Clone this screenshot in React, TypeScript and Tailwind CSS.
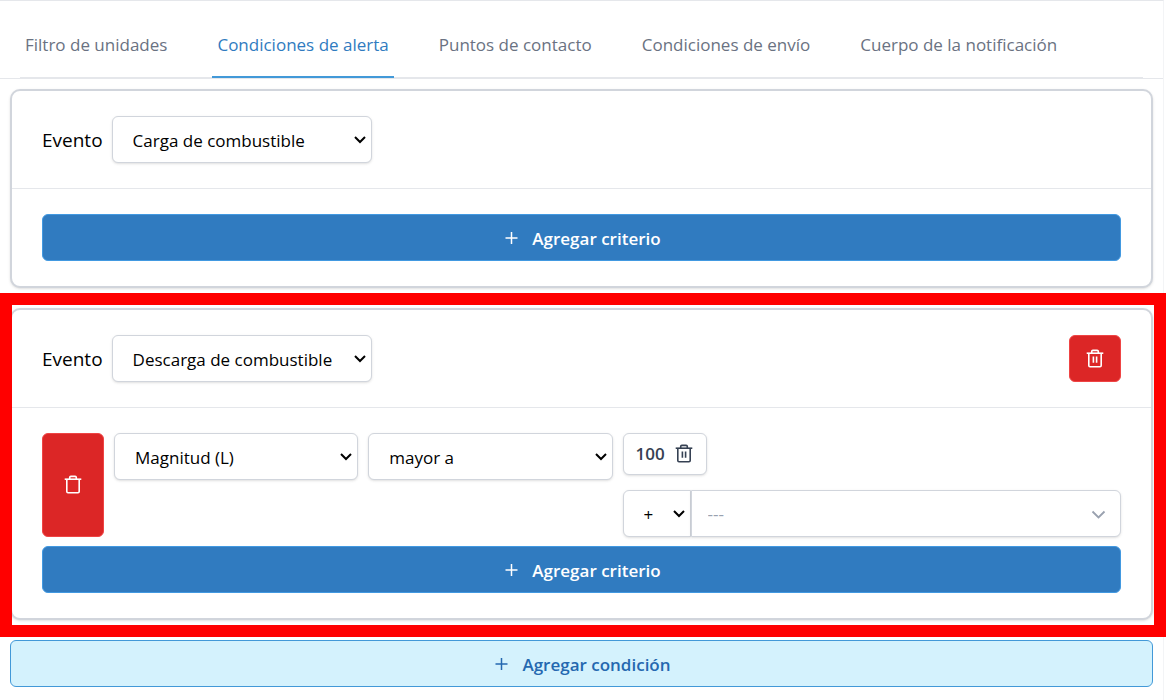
import { useState } from 'react';

const TABS = [
  'Filtro de unidades',
  'Condiciones de alerta',
  'Puntos de contacto',
  'Condiciones de envío',
  'Cuerpo de la notificación',
];

const EVENTOS = ['Carga de combustible', 'Descarga de combustible'];

function PlusIcon() {
  return (
    <svg className="size-5" viewBox="0 0 20 20" fill="none" stroke="currentColor" aria-hidden="true">
      <path d="M9.5 3v12M3.500 9h12" strokeWidth="1.500" />
    </svg>
  );
}

function TrashIcon({ lines = true }: { lines?: boolean }) {
  return (
    <svg className="size-5" viewBox="0 0 20 20" fill="none" stroke="currentColor" strokeWidth="1.6" aria-hidden="true">
      <path d="M1.700 4.200h16.600" />
      <path d="M3.800 4.200v12.300q0 1.200 1.200 1.200h10q1.200 0 1.200-1.200V4.200" />
      <path d="M6.700 4.200V2.600q0-1.200 1.200-1.200h4.200q1.200 0 1.200 1.200v1.600" />
      {lines && <path d="M8.400 7.500v6.300M11.600 7.500v6.300" />}
    </svg>
  );
}

interface SelectProps {
  id?: string;
  label?: string;
  options: string[];
  defaultValue?: string;
  className?: string;
  rounded?: string;
}

function Select({ id, label, options, defaultValue, className = '', rounded = 'rounded-md' }: SelectProps) {
  return (
    <div className={`relative ${className}`}>
      <select
        id={id}
        aria-label={label}
        defaultValue={defaultValue}
        className={`h-[47px] w-full appearance-none border border-gray-300 bg-white pt-0.5 pl-5 text-[17px] text-black shadow-sm ${rounded}`}
      >
        {options.map((o) => (
          <option key={o}>{o}</option>
        ))}
      </select>
      <svg
        className="pointer-events-none absolute top-[18px] right-[6px] h-[10px] w-3"
        viewBox="0 0 12 10"
        fill="none"
        stroke="black"
        strokeWidth="2"
        aria-hidden="true"
      >
        <path d="M1 3l5 5 5-5" />
      </svg>
    </div>
  );
}

function AgregarCriterio() {
  return (
    <button
      type="button"
      className="flex h-[47px] w-full items-center justify-center gap-[10px] rounded-md border border-[#4299e1] bg-[#307bc0] pt-0.5 text-[17px] font-semibold text-white"
    >
      <PlusIcon />
      Agregar criterio
    </button>
  );
}

function Criterio() {
  return (
    <div className="flex gap-[10px]">
      <button
        type="button"
        aria-label="Eliminar criterio"
        className="flex w-[62px] shrink-0 items-center justify-center rounded-md border border-[#ef4444] bg-[#dc2626] text-white"
      >
        <TrashIcon lines={false} />
      </button>
      <div className="grid flex-1 grid-cols-4 items-start gap-[10px]">
        <Select label="Campo" options={['Magnitud (L)']} />
        <Select label="Operador" options={['mayor a']} />
        <div className="col-span-2 flex flex-col items-start gap-[15px]">
          <button
            type="button"
            className="flex h-[42px] items-center gap-[9px] rounded-md border border-gray-300 bg-white px-3 text-[17px] font-semibold text-gray-700 shadow-sm"
          >
            100
            <TrashIcon />
          </button>
          <div className="flex w-full">
            <Select label="Signo" options={['+', '-']} className="w-[68px]" rounded="rounded-l-md" />
            <div className="relative flex-1">
              <select
                aria-label="Valor"
                className="h-[47px] w-full appearance-none rounded-r-md border border-gray-300 bg-white px-4 text-[17px] text-gray-400 shadow-sm"
              >
                <option>---</option>
              </select>
              <svg
                className="pointer-events-none absolute top-[14px] right-3 size-5 text-gray-400"
                viewBox="0 0 20 20"
                fill="none"
                stroke="currentColor"
                strokeWidth="1.8"
                aria-hidden="true"
              >
                <path d="M3.500 7.500l6 6 6-6" />
              </svg>
            </div>
          </div>
        </div>
      </div>
    </div>
  );
}

interface CondicionProps {
  id: string;
  evento: string;
  eliminable?: boolean;
  children?: React.ReactNode;
}

function Condicion({ id, evento, eliminable, children }: CondicionProps) {
  return (
    <section className="rounded-[10px] border-2 border-gray-300 bg-white shadow">
      <div className="flex items-center justify-between border-b border-gray-200 px-[30px] py-[25px]">
        <div className="flex items-center gap-[9px]">
          <label htmlFor={id} className="pt-0.5 text-[19px] text-black">
            Evento
          </label>
          <Select id={id} options={EVENTOS} defaultValue={evento} className="w-[260px]" />
        </div>
        {eliminable && (
          <button
            type="button"
            aria-label="Eliminar condición"
            className="flex h-[47px] w-[52px] items-center justify-center rounded-md border border-[#ef4444] bg-[#dc2626] text-white"
          >
            <TrashIcon />
          </button>
        )}
      </div>
      <div className="flex flex-col gap-[9px] px-[30px] py-[25px]">
        {children}
        <AgregarCriterio />
      </div>
    </section>
  );
}

export default function App() {
  const [activeTab, setActiveTab] = useState(1);

  return (
    <div className="min-h-screen bg-white font-['Open_Sans',sans-serif]">
      <div className="mr-[2px] min-h-screen border-t border-r border-t-gray-200 border-r-gray-100">
        {/* Pestañas */}
        <header className="border-b border-gray-200 px-5">
          <nav className="flex gap-10 border-b border-gray-200 pt-2">
            {TABS.map((tab, i) => (
              <button
                key={tab}
                type="button"
                onClick={() => setActiveTab(i)}
                className={
                  i === activeTab
                    ? '-mb-px h-[69px] border-b-2 border-[#4299d8] px-[5px] pt-1 text-[17px] font-medium text-[#307bc0]'
                    : '-mb-px h-[69px] border-b-2 border-transparent px-[5px] pt-1 text-[17px] font-medium text-gray-500'
                }
              >
                {tab}
              </button>
            ))}
          </nav>
        </header>

        {/* Condiciones */}
        <main className="flex flex-col gap-5 p-[10px]">
          <Condicion id="evento-1" evento="Carga de combustible" />
          <div className="relative">
            <Condicion id="evento-2" evento="Descarga de combustible" eliminable>
              <Criterio />
            </Condicion>
            {/* Marco rojo de resaltado */}
            <div className="pointer-events-none absolute -top-[15px] -right-[13px] -bottom-[17px] -left-[10px] border-[12px] border-[#ff0000]" />
          </div>
          <button
            type="button"
            className="flex h-[47px] w-full items-center justify-center gap-[10px] rounded-md border border-[#4299d8] bg-[#d4f2fd] pt-0.5 text-[17px] font-semibold text-[#2468b0]"
          >
            <PlusIcon />
            Agregar condición
          </button>
        </main>
      </div>
    </div>
  );
}
